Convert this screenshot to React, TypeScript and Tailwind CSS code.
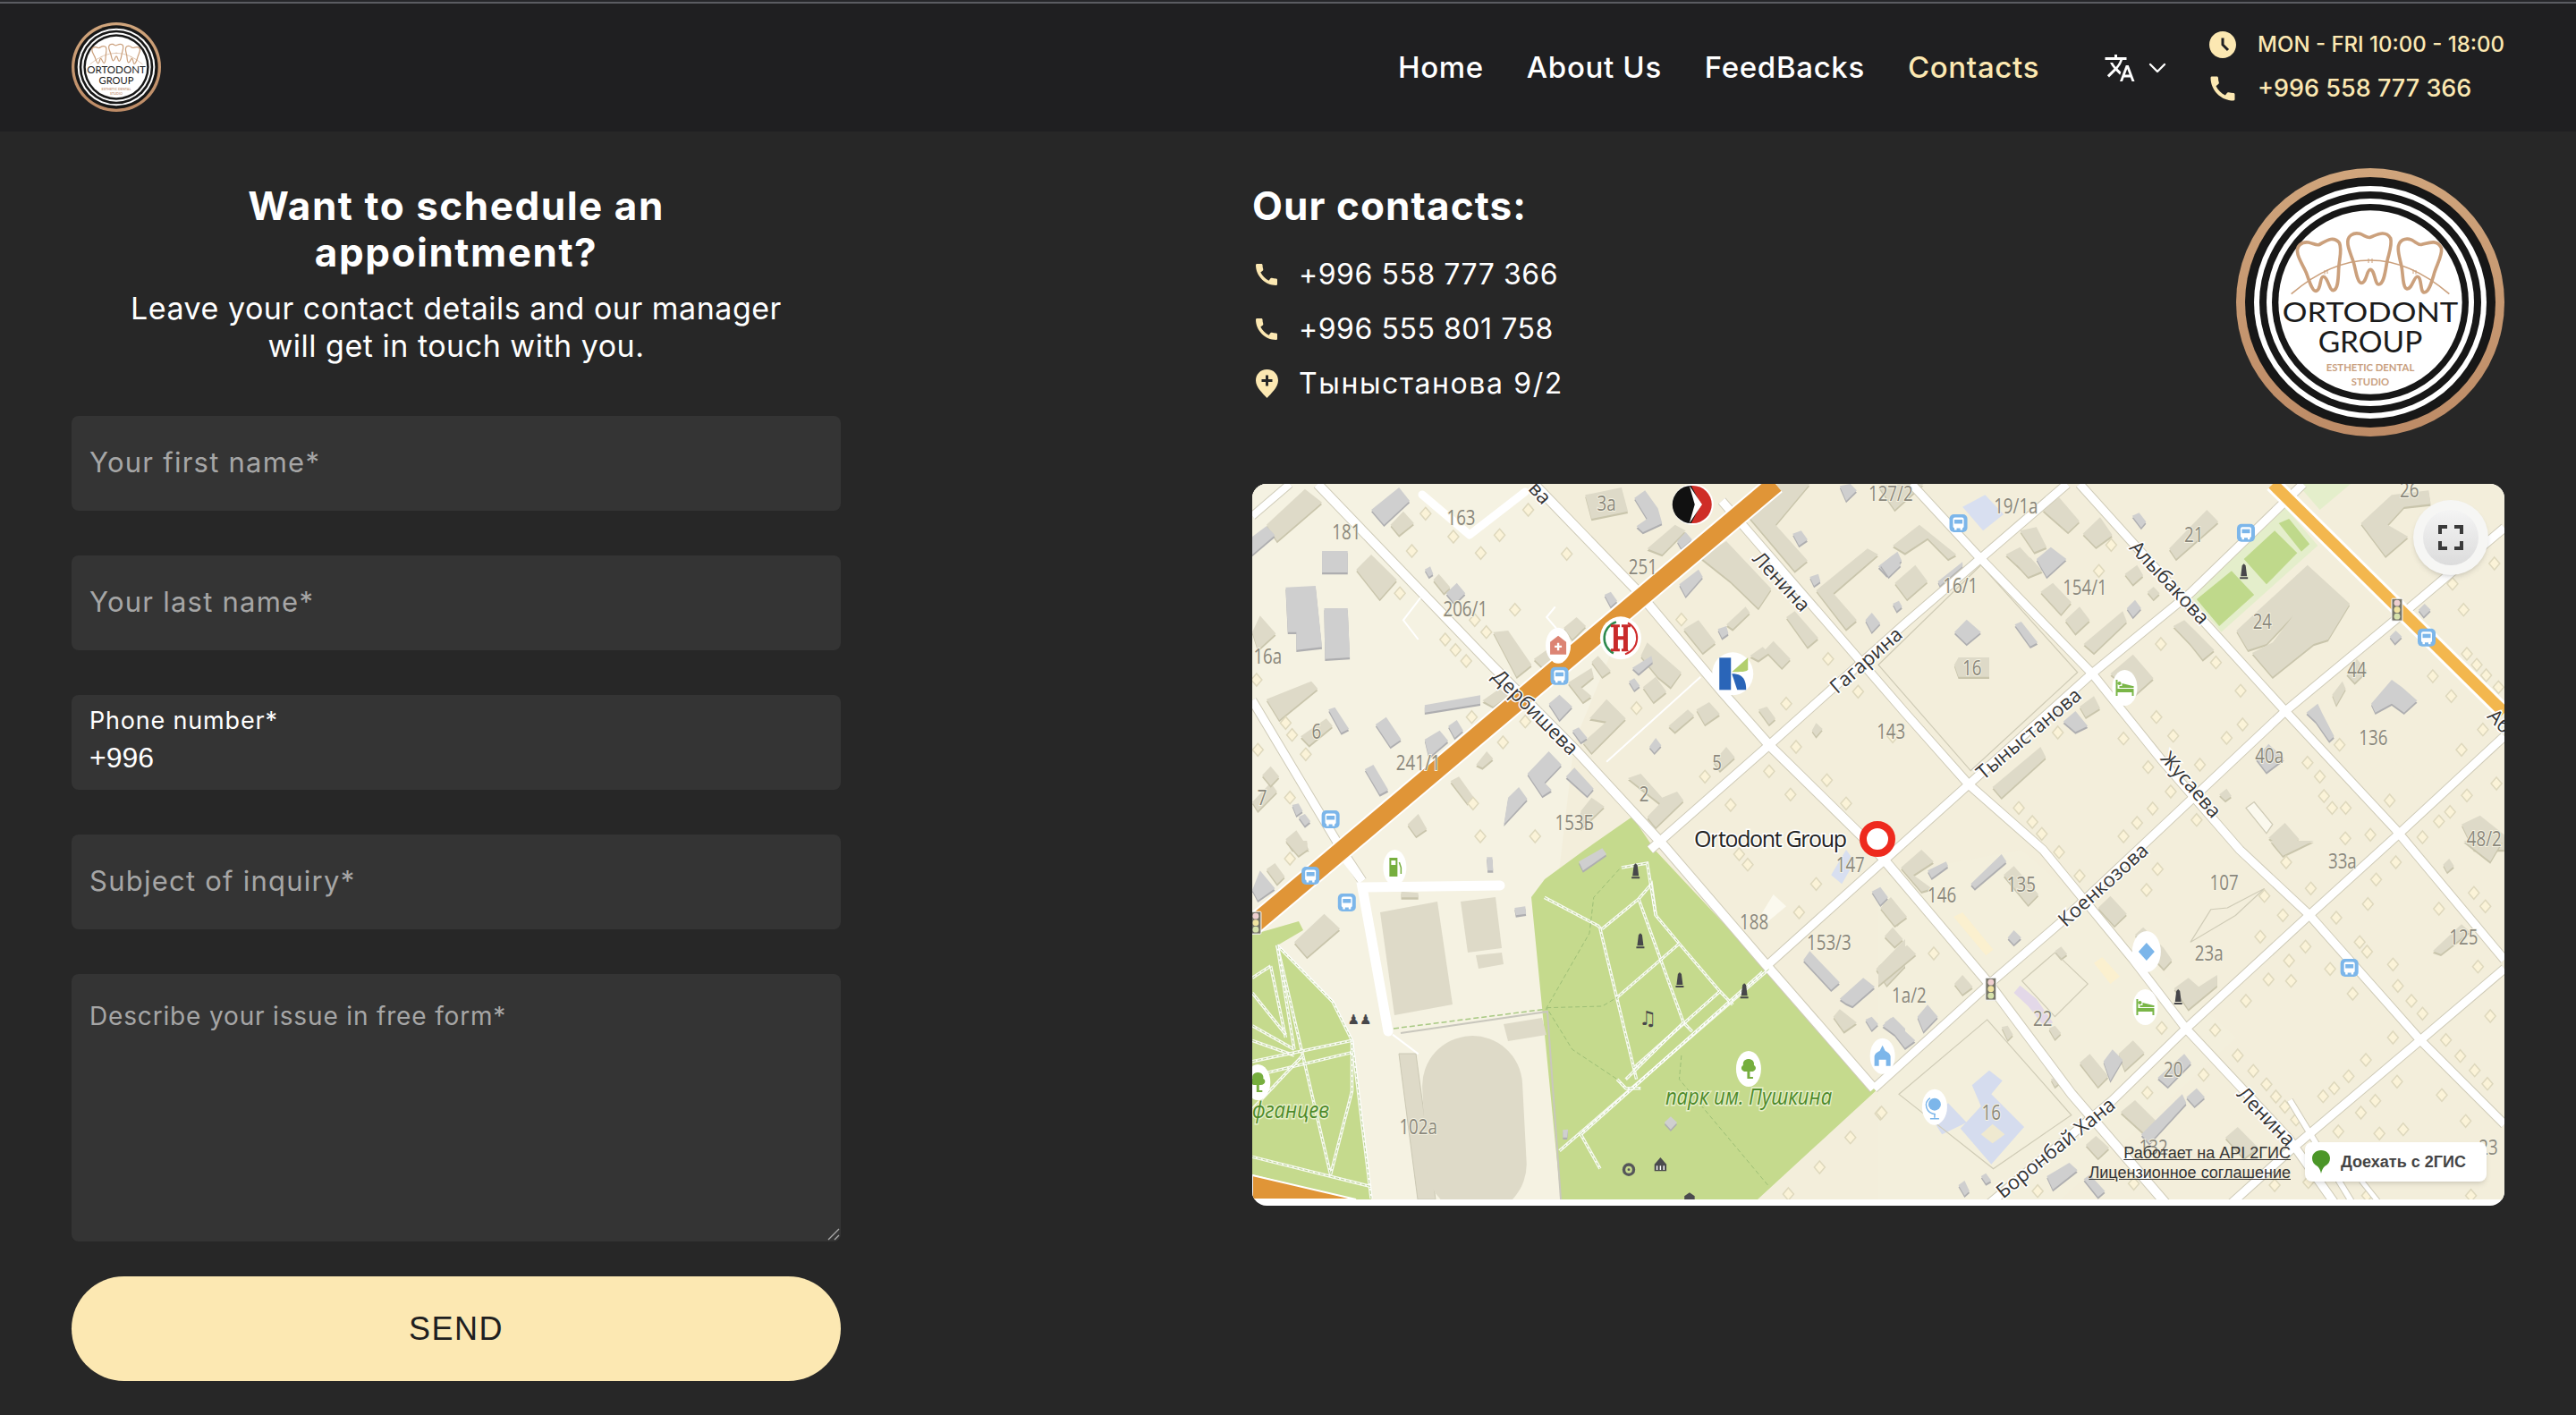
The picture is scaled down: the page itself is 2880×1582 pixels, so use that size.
import { ChevronDown } from 'lucide-react';
import { MdAccessTimeFilled, MdCall, MdTranslate } from 'react-icons/md';
import type { ReactNode } from 'react';

// Map geometry is noted in the pixel units of four crops of the map, one group per quadrant.
const Q = {
  nw: { x: 1380, y: 530, sx: 2.0907 },
  ne: { x: 2100, y: 530, sx: 2.1778 },
  sw: { x: 1380, y: 940, sx: 2.0907 },
  se: { x: 2100, y: 940, sx: 2.1778 },
};
type QuadName = keyof typeof Q;
const qt = (q: QuadName) => `translate(${Q[q].x} ${Q[q].y}) scale(${1 / Q[q].sx} ${1 / 3})`;
const at = (q: QuadName, x: number, y: number): [number, number] => [Q[q].x + x / Q[q].sx, Q[q].y + y / 3];

const TAN: Record<QuadName, string[]> = {
  nw: [
    '75,170 165,50 205,95 100,225', '285,320 320,270 380,355 340,420', '365,170 395,125 420,165 385,205',
    '465,355 478,335 505,380 490,400', '605,530 640,525 695,640 660,680', '700,620 750,570 770,590 725,655',
    '770,515 800,480 822,510 790,555', '75,755 180,695 195,720 105,825', '155,880 215,820 230,845 175,910',
    '580,760 620,720 640,745 605,780', '835,630 850,610 880,660 860,680', '780,700 835,650 840,680 810,715 835,745 815,765',
    '965,565 1045,665 1020,715 990,680 950,610', '955,715 985,680 1010,730 980,765', '830,820 870,755 915,820 835,935 815,900 870,830',
    '1015,845 1060,790 1075,810 1030,865', '1080,790 1110,765 1135,805 1100,840', '1050,520 1085,490 1125,565 1095,600',
    '1150,505 1195,445 1205,465 1165,520', '1090,280 1150,225 1255,385 1225,450 1160,360', '965,250 1030,170 1055,190 1000,270',
    '1195,130 1270,33 1345,33 1265,170 1340,290 1310,325', '1360,390 1480,250 1505,270 1400,400 1455,490 1430,520',
    '1290,480 1310,460 1365,550 1340,580', '1240,590 1260,560 1300,620 1280,650', '1205,610 1235,580 1250,600 1225,625',
    '1225,790 1245,780 1265,820 1250,840', '1350,860 1360,835 1375,855 1360,880', '1120,965 1150,915 1170,950 1135,995',
    '920,1020 950,1005 1000,1085 1035,1065 1050,1095 985,1185 965,1150 995,1105', '810,1130 835,1085 865,1115 810,1190',
    '505,1030 525,1015 560,1085 545,1105', '565,975 590,930 605,955 580,985', '405,1175 430,1140 450,1190 425,1215',
    '120,1225 145,1195 175,1260 135,1260', '42,1100 85,1035 100,1065 55,1130', '42,530 60,475 97,535 55,590',
    '65,1010 85,980 105,1015 85,1045', '820,70 905,45 920,125 835,150',
  ],
  ne: [
    '400,120 440,78 490,158 462,195', '498,200 540,145 570,205 530,245', '310,270 345,245 375,290 345,315',
    '345,190 385,178 410,245 380,262', '335,300 370,280 400,325 365,345', '40,365 90,305 120,360 70,420',
    '35,240 100,170 190,270 170,285 120,215 65,265', '395,395 425,365 470,430 445,470', '455,490 490,445 515,490 480,535',
    '500,570 595,460 605,495 525,600', '600,335 630,305 645,340 620,370', '655,395 670,378 685,400 670,420',
    '708,250 800,120 828,160 725,285', '718,510 745,490 775,530 818,590 790,622 760,570',
    '872,525 1045,305 1148,435 1095,555 1060,570 960,680 910,600 960,565 1010,475 945,570 900,590',
    '565,670 620,605 670,685 625,740', '278,1050 395,915 408,950 300,1085', '1105,740 1130,695 1138,720 1115,775',
    '490,780 525,745 540,785 505,815', '1140,670 1165,620 1190,660 1160,700',
    '1175,165 1250,70 1340,55 1345,100 1280,110 1240,170 1290,210 1235,275', '185,640 195,615 270,615 270,680 195,680',
    '830,1075 848,1055 860,1080 845,1095', '1420,1175 1465,1145 1524,1210 1524,1260 1450,1260', '950,1220 990,1170 1025,1225 990,1260',
    '0,40 60,33 110,33 40,120',
  ],
  sw: [
    '75,95 95,75 118,120 100,145', '140,340 210,245 247,295 170,390', '1500,430 1568,330 1568,420 1525,485',
    '1515,215 1535,190 1568,250 1550,280', '1400,590 1415,565 1455,610 1425,640', '390,170 430,175 430,190 390,190',
    '120,0 170,0 170,30 150,50',
  ],
  se: [
    '55,90 105,30 135,70 85,115 130,160 105,170', '305,115 330,85 390,180 365,215', '5,225 30,190 70,255 40,285',
    '15,320 35,290 60,330 40,355', '0,420 70,350 92,380 0,485', '185,480 205,450 230,490 205,515', '430,370 445,355 460,380 445,395',
    '535,225 565,185 605,245 575,285', '625,315 645,290 695,360 715,400 695,430 655,370', '720,495 755,460 780,490 825,450 825,485 755,565',
    '490,745 515,715 560,790 535,825', '585,715 620,670 648,710 600,770', '415,630 430,620 445,645 430,665', '300,625 315,620 328,650 315,668',
    '420,800 435,790 443,810 430,825', '590,910 625,870 680,945 650,985', '845,995 875,960 925,1030 890,1065', '505,1020 530,990 562,1030 535,1065',
    '1350,370 1420,280 1440,305 1370,380', '955,0 1060,0 985,50', '1425,0 1520,0 1490,70', '1375,80 1390,60 1402,85 1385,105',
  ],
};

const GRAY: Record<QuadName, string[]> = {
  nw: [
    '320,120 385,45 410,90 350,170', '42,210 75,175 95,205 42,270', '205,258 265,258 265,330 205,330',
    '120,380 190,375 205,580 145,590 145,530 125,530', '210,450 265,450 270,615 212,620', '495,400 520,365 540,400 515,435',
    '935,80 960,55 990,115 1000,165 955,195 940,175 965,150', '1035,225 1055,195 1070,220 1045,250', '1040,370 1085,320 1095,345 1055,410',
    '1130,520 1150,510 1155,535 1140,550', '930,650 975,610 978,630 945,670', '922,695 935,685 948,710 935,725', '445,775 575,742 575,770 445,800',
    '220,790 235,782 268,855 250,868', '330,840 355,815 390,890 365,915', '445,890 480,860 500,895 455,950', '500,845 520,825 535,860 515,885',
    '305,990 325,975 360,1060 340,1075', '685,1005 735,930 765,975 725,1035 742,1060 720,1080', '775,1015 795,985 840,1055 825,1080',
    '640,1085 665,1050 685,1090 630,1175', '735,770 760,740 790,780 760,825', '790,860 805,850 825,885 810,900', '970,915 985,885 998,910 982,935',
    '1505,310 1550,260 1560,290 1525,340', '1475,490 1490,465 1510,500 1490,530', '1415,40 1440,33 1455,55 1430,90', '1305,200 1325,190 1340,220 1320,240',
    '1345,345 1365,335 1370,360 1355,375', '445,320 458,310 465,335 455,345', '135,1110 150,1105 160,1130 145,1145', '150,1150 165,1140 178,1165 165,1180',
    '865,405 880,395 895,425 880,445',
  ],
  ne: [
    '5,305 35,272 55,305 25,345', '145,360 205,295 205,310 150,375', '185,530 215,488 250,530 215,570', '332,505 348,495 388,565 370,578',
    '385,285 420,245 458,285 410,345', '35,435 50,425 58,445 45,460', '605,450 625,422 640,450 620,480', '618,140 635,130 652,160 640,180',
    '450,830 480,795 510,845 480,865', '1245,545 1260,525 1275,545 1258,568', '1200,770 1250,690 1275,715 1312,760 1280,800 1250,770 1210,800',
    '1042,800 1070,770 1080,800 1110,880 1098,895 1065,830', '920,955 950,905 988,955 945,1000', '1315,455 1330,435 1345,455 1328,478',
  ],
  sw: [
    '805,70 860,25 870,45 815,100', '42,165 60,100 95,160 55,200', '1490,170 1510,155 1528,190 1510,215', '1330,400 1345,370 1415,475 1395,500',
    '1415,530 1470,460 1497,490 1445,555 1430,545', '1520,610 1540,590 1568,630 1568,670', '1475,600 1490,590 1505,615 1490,635',
    '590,55 603,55 605,100 592,100', '655,225 680,220 682,245 658,250', '1005,945 1020,925 1035,945 1020,968', '768,970 780,968 778,995 768,995',
  ],
  se: [
    '225,145 300,45 312,70 235,160', '120,100 165,70 170,85 130,125', '315,325 330,300 348,325 330,348', '548,740 570,700 595,735 565,805',
    '680,795 745,715 762,745 705,825', '640,985 740,850 750,880 660,1015', '750,860 775,830 795,860 770,890', '410,1125 465,1080 485,1105 425,1170',
    '500,1135 515,1120 552,1175 535,1195', '195,1155 210,1140 222,1175 210,1190', '250,1125 262,1115 275,1140 262,1150',
    '10,620 30,595 90,670 65,695 40,650', '95,590 120,550 145,590 110,640',
  ],
};

const DIAMONDS: Record<QuadName, number[]> = {
  nw: [447,133,687,120,512,210,620,205,415,258,576,265,777,268,387,400,656,455,562,490,589,530,493,555,517,590,542,627,1045,488,940,785,1290,770,1458,730,1388,620,555,815,628,900,680,830,1313,915,1100,1015,1250,997,1385,1027,1300,1075,1430,1105,1160,1110,575,1215,703,1215,558,1105,130,1085,120,835,135,875,167,940,55,925,52,690],
  ne: [567,238,537,325,688,570,822,632,882,727,887,840,848,885,783,975,1123,908,1350,678,1395,745,1472,857,1420,925,1398,368,1425,455,1500,300,1433,603,1457,640,1480,675,1510,715,677,815,718,878,597,887,437,867,657,983,1045,968,1075,1015,342,1120,375,1167,398,1207,630,1170,668,1122,712,1065,775,1160,597,1215,1085,1080,1105,1120,1138,1120,1245,1095,1365,1165,1392,1133,1433,1078,1505,1038,1325,1218,1137,1222,1198,1210,35,880],
  sw: [130,60,1320,240,1360,145,1200,80,1180,45,1368,1095,1295,1185,1510,915,1440,995],
  se: [440,38,680,95,490,118,653,165,993,72,1260,72,1053,160,1212,130,1192,212,1450,175,1365,228,1478,220,1115,258,985,250,940,185,930,322,1000,402,1040,355,1172,340,1190,372,1253,415,1100,430,1460,422,950,465,1005,470,895,537,1265,487,1155,513,1298,537,1325,580,1490,588,820,635,690,628,1382,668,1253,660,1417,722,1452,770,1187,735,875,720,913,772,1483,815,792,785,945,817,1145,790,1110,830,1083,857,968,858,990,892,1017,935,1263,808,1372,853,1210,872,1430,940,1175,912,1120,975,1278,968,1220,982,655,845,135,378,8,912,965,1155,1047,1145,1190,1190,1443,1190,388,1175,622,1150],
};

const NUMBERS: [QuadName, string, number, number][] = [
  ['nw','181',262,195],['nw','163',530,148],['nw','3а',870,100],['nw','251',955,312],['nw','206/1',540,453],['nw','16а',78,612],['nw','6',192,865],
  ['nw','241/1',430,968],['nw','5',1128,970],['nw','2',958,1075],['nw','7',65,1085],['nw','153Б',795,1170],['nw','143',1535,865],
  ['ne','127/2',30,65],['ne','19/1а',335,107],['ne','16/1',200,375],['ne','154/1',503,380],['ne','21',768,203],['ne','26',1293,55],['ne','24',935,495],
  ['ne','16',228,650],['ne','44',1165,657],['ne','136',1205,885],['ne','40а',952,945],['ne','48/2',1475,1225],
  ['sw','147',1440,80],['sw','188',1215,272],['sw','153/3',1390,342],['sw','102а',430,960],
  ['se','146',155,183],['se','135',348,147],['se','107',842,140],['se','33а',1130,68],['se','125',1425,325],['se','23а',805,377],['se','1а/2',75,520],
  ['se','22',400,597],['se','20',718,768],['se','16',275,912],['se','23',1485,1030],['se','132',670,1030],
];

// page coordinates: centre x, centre y, angle
const STREETS: [string, number, number, number][] = [
  ['Дербишева', 1717, 796, 45], ['Ленина', 1992, 650, 47], ['Гагарина', 2086, 738, -41], ['Алыбакова', 2426, 651, 47],
  ['Тыныстанова', 2268, 820, -40], ['Жусаева', 2450, 877, 49], ['Коенкозова', 2351, 989, -42], ['Боронбай Хана', 2298, 1283, -39],
  ['Ленина', 2534, 1248, 46], ['ва', 1722, 551, 47], ['Аб', 2795, 806, 46],
];

const ROADS: [string, number][] = [
  ['1473,541 1667,743 1763,840 1858,943 1973,1077 2095,1217', 10],
  ['1715,541 1830,660 1925,773 1978,833 2097,950 2224,1100 2316,1223 2421,1345', 10],
  ['1925,560 2130,797 2201,877 2284,950 2385,1073 2444,1150 2559,1273 2610,1345', 9],
  ['2137,541 2210,620 2339,753 2417,850 2504,950 2582,1023 2706,1163 2800,1257', 9],
  ['2325,541 2444,673 2555,795 2678,927 2800,1073', 9],
  ['1400,783 1500,950 1523,985', 9],
  ['1845,950 1978,833 2130,697 2311,541', 9],
  ['1975,1080 2201,877 2339,753 2449,663 2575,541', 9],
  ['2095,1217 2224,1100 2302,1033 2555,795 2678,693 2800,590', 9],
  ['2225,1345 2362,1230 2444,1150 2582,1023 2679,935 2800,823', 9],
  ['2495,1345 2564,1283 2706,1163 2800,1083', 9],
  ['1400,577 1442,541', 8],
  ['2630,1345 2560,1230', 6],
  ['2660,1345 2640,1320', 5],
];

const LEFT_PATHS = [
  '100,350 230,540 275,670 320,1200', '100,350 225,1120 275,840 275,670', '85,420 120,660', '42,460 85,420', '42,620 140,700', '42,670 140,720',
  '42,740 275,670', '42,790 275,710', '42,1060 320,1160', '42,510 120,650', '160,720 42,900', '100,350 140,700',
];
const PARK_PATHS = [
  '725,190 850,285 860,300', '855,295 940,800', '860,295 945,195 975,145 985,250 1040,345 1135,505 1165,550', '945,195 1050,610 1070,640',
  '1040,345 895,525', '1135,505 935,760', '1050,610 915,800', '760,1040 1250,430', '810,985 1235,440', '895,800 915,830 950,830', '810,985 855,1100',
  '905,90 965,75 985,250',
];

function BusStop({ q, x, y }: { q: QuadName; x: number; y: number }) {
  const [px, py] = at(q, x, y);
  return (
    <g transform={`translate(${px} ${py})`}>
      <rect x="-10" y="-10" width="20" height="20" rx="5" fill="#7cb6ea" />
      <rect x="-6" y="-6.5" width="12" height="12" rx="2" fill="#fff" />
      <rect x="-4.5" y="-4" width="9" height="4.5" fill="#7cb6ea" />
      <rect x="-4.5" y="5" width="2.5" height="2.5" fill="#fff" />
      <rect x="2" y="5" width="2.5" height="2.5" fill="#fff" />
    </g>
  );
}

function TrafficLight({ q, x, y }: { q: QuadName; x: number; y: number }) {
  const [px, py] = at(q, x, y);
  return (
    <g transform={`translate(${px} ${py})`}>
      <rect x="-6" y="-12.5" width="12" height="25" rx="1" fill="#77766a" stroke="#fff" />
      <circle cy="-7.5" r="3.4" fill="#efcfd0" />
      <circle r="3.4" fill="#f0e3a0" />
      <circle cy="7.5" r="3.4" fill="#d6e2ac" />
    </g>
  );
}

function Monument({ q, x, y }: { q: QuadName; x: number; y: number }) {
  const [px, py] = at(q, x, y);
  return <path transform={`translate(${px} ${py})`} d="M-2 -7 L0 -9 L2 -7 L3.5 5 L-3.5 5 Z M-4.5 6 H4.5 V8 H-4.5 Z" fill="#47474a" />;
}

function Poi({ q, x, y, rx = 14, ry = 20, children }: { q: QuadName; x: number; y: number; rx?: number; ry?: number; children?: ReactNode }) {
  const [px, py] = at(q, x, y);
  return (
    <g transform={`translate(${px} ${py})`}>
      <ellipse rx={rx} ry={ry} fill="#fff" />
      {children}
    </g>
  );
}

const BED = <path d="M-10 -9 H-8 V1 H10 V9 H8 V5 H-8 V9 H-10 Z M-6 -2 H10 V0 H-6 Z M-6 -7 a2 2 0 1 0 .1 0 Z M-3 -5 L9 -2 H-3 Z" fill="#7ab648" />;
const TREE = <path d="M-1.5 11 V3 C-8 4 -10 -2 -6 -4 C-7 -10 -2 -11 0 -11 C2 -11 7 -10 6 -4 C10 -2 8 4 1.5 3 V9 H5 V11 Z" fill="#76ae3e" />;

function CityMap() {
  return (
    <svg viewBox="1400 541 1400 800" className="block h-[800px] w-[1400px]" fontFamily="'Open Sans', sans-serif">
      <rect x="1400" y="541" width="1400" height="800" fill="#f3eedb" />
      <polygon points="1400,541 1720,541 1830,660 1760,830 1740,1000 1745,1341 1400,1341" fill="#f5f2e2" />
      <polygon points="2100,980 2260,950 2500,1160 2300,1345 2100,1345" fill="#f3efdc" />
      <polygon points="2560,760 2700,870 2600,1000 2480,870" fill="#f3eedb" />

      {/* parks */}
      <polygon points="1825,913 1850,950 2100,1217 1965,1341 1745,1341 1712,1003 1727,983 1772,950" fill="#c5da8d" />
      <polygon points="1400,1050 1428,1057 1490,1120 1512,1163 1533,1341 1514,1341 1400,1313" fill="#c5da8d" />
      <polygon points="1400,1045 1452,1030 1457,1040 1428,1057 1400,1070" fill="#c5da8d" />
      <g transform={qt('ne')}>
        <polygon points="760,410 990,110 1070,240 835,530" fill="#e4eecb" />
        <polygon points="1020,33 1150,33 1075,120" fill="#e4eecb" />
        <polygon points="775,420 860,325 915,405 830,510" fill="#bfd98b" />
        <polygon points="890,285 965,190 1020,265 945,370" fill="#bfd98b" />
        <polygon points="975,165 1000,150 1050,235 1030,260" fill="#bfd98b" />
      </g>

      {/* stadium grounds */}
      <g fill="#dedac8">
        <polygon points="1543,1020 1607,1008 1624,1123 1559,1135" />
        <polygon points="1633,1008 1672,1003 1679,1060 1641,1065" />
        <polygon points="1650,1068 1679,1065 1681,1078 1653,1083" />
        <polygon points="1681,1145 1724,1138 1729,1157 1686,1164" />
        <polygon points="1564,1178 1583,1178 1605,1341 1585,1341" stroke="#cbc8b4" />
        <rect x="1592" y="1158" width="112" height="200" rx="56" transform="rotate(-3 1648 1250)" />
      </g>
      <polyline points="1566,1155 1730,1131 1745,1341" fill="none" stroke="#c9c7bd" strokeWidth="2" />
      <polyline points="1558,1150 1730,1128" fill="none" stroke="#a8c983" strokeWidth="1.5" strokeDasharray="6 3" />

      {/* buildings */}
      {(Object.keys(Q) as QuadName[]).map((q) => (
        <g key={q} transform={qt(q)}>
          {TAN[q].map((p) => (
            <g key={p}>
              <polygon points={p} fill="#c9c5ac" transform="translate(0 7)" />
              <polygon points={p} fill="#dedac8" />
            </g>
          ))}
          {GRAY[q].map((p) => (
            <g key={p}>
              <polygon points={p} fill="#aeaeb0" transform="translate(0 7)" />
              <polygon points={p} fill="#cfcfcf" />
            </g>
          ))}
        </g>
      ))}
      <g transform={qt('ne')}>
        <polygon points="205,110 260,70 305,135 255,190" fill="#d8dff0" />
        <polygon points="895,1120 915,1100 960,1175 945,1205" fill="#fbf9ee" stroke="#cfcbb6" strokeWidth="3" />
        <polygon points="250,305 485,665 225,995 0,640" fill="none" stroke="#cfcbb6" strokeWidth="3" />
      </g>
      <g transform={qt('sw')}>
        <polygon points="1395,115 1430,30 1450,70 1420,145" fill="#d8dff0" />
        <polygon points="1230,250 1260,180 1290,220 1240,280" fill="#fbf9ee" />
      </g>
      <g transform={qt('se')}>
        <polygon points="228,820 270,770 302,805 275,850 355,960 275,1085 200,965 250,890" fill="#d5dcee" />
        <polygon points="250,985 278,950 308,985 278,1015" fill="#efe9d0" />
        <polygon points="130,930 170,880 215,945 155,985" fill="#d5dcee" />
        <polygon points="330,510 345,485 385,530 425,610 405,625 365,555" fill="#e3d8e8" />
        <polygon points="183,255 205,240 280,365 262,385" fill="#fbf0cf" />
        <polygon points="525,410 545,390 588,455 565,480" fill="#fbf0cf" />
        <polygon points="350,470 430,375 510,480 430,590" fill="none" stroke="#cfcbb6" strokeWidth="3" />
        <polygon points="810,230 850,225 940,160 870,250 760,340" fill="none" stroke="#cfcbb6" strokeWidth="3" />
        <polygon points="50,850 265,600 470,920 280,1100" fill="none" stroke="#cfcbb6" strokeWidth="3" />
      </g>

      {/* small houses */}
      {(Object.keys(DIAMONDS) as QuadName[]).map((q) =>
        DIAMONDS[q]
          .filter((_, i) => i % 2 === 0)
          .map((v, i) => {
            const [px, py] = at(q, v, DIAMONDS[q][i * 2 + 1]);
            return <polygon key={`${q}${i}`} transform={`translate(${px} ${py})`} points="0,-7 6,0 0,7 -6,0" fill="#fbf3d8" stroke="#ded8bd" strokeWidth="1.5" />;
          }),
      )}

      {/* streets */}
      {ROADS.map(([p, w]) => (
        <polyline key={p} points={p} fill="none" stroke="#cfcbb8" strokeWidth={w + 2} />
      ))}
      {ROADS.map(([p, w]) => (
        <polyline key={p} points={p} fill="none" stroke="#fff" strokeWidth={w} />
      ))}
      <polyline points="1590,553 1643,598 1705,550" fill="none" stroke="#fff" strokeWidth="9" strokeLinecap="round" strokeLinejoin="round" />
      <polyline points="1677,990 1523,992 1552,1153" fill="none" stroke="#fff" strokeWidth="11" strokeLinecap="round" />
      <polyline points="1523,985 1500,955" fill="none" stroke="#fff" strokeWidth="9" />
      <g transform={qt('nw')} fill="none" stroke="#fff" strokeWidth="2">
        <polyline points="435,415 395,490 430,555" vectorEffect="non-scaling-stroke" />
        <polyline points="750,445 730,480 760,530" vectorEffect="non-scaling-stroke" />
        <polyline points="1090,680 870,965" vectorEffect="non-scaling-stroke" />
      </g>

      {/* park paths */}
      <g fill="none" transform={qt('sw')}>
        {[...LEFT_PATHS, ...PARK_PATHS].map((p) => (
          <g key={p}>
            <polyline points={p} stroke="#fff" strokeWidth="3.5" vectorEffect="non-scaling-stroke" opacity="0.85" />
            <polyline points={p} stroke="#a9c77f" strokeWidth="0.8" strokeDasharray="4 2" vectorEffect="non-scaling-stroke" />
          </g>
        ))}
        <polyline points="900,95 840,190 830,310 730,560 790,700 895,800" stroke="#9dbf76" strokeWidth="1" strokeDasharray="5 3" vectorEffect="non-scaling-stroke" />
        <polyline points="730,560 860,555 895,525" stroke="#9dbf76" strokeWidth="1" strokeDasharray="5 3" vectorEffect="non-scaling-stroke" />
        <polyline points="1045,720 1040,800 1250,1160" stroke="#9dbf76" strokeWidth="1" strokeDasharray="5 3" vectorEffect="non-scaling-stroke" />
        <polyline points="370,650 430,715" stroke="#fff" strokeWidth="2" vectorEffect="non-scaling-stroke" />
      </g>

      {/* highways */}
      <polyline points="1985,541 1400,1035" fill="none" stroke="#fff" strokeWidth="24" />
      <polyline points="1985,541 1400,1035" fill="none" stroke="#e09537" strokeWidth="20" />
      <polyline points="2541,541 2800,797" fill="none" stroke="#fff" strokeWidth="19" />
      <polyline points="2541,541 2800,797" fill="none" stroke="#f3b74e" strokeWidth="13" />
      <polygon points="1400,1314 1516,1341 1400,1341" fill="#e09537" stroke="#fff" strokeWidth="2" />

      {/* stand-in glyphs */}
      <g transform={qt('sw')}>
        <ellipse cx="922" cy="1103" rx="15" ry="22" fill="#55565a" />
        <ellipse cx="922" cy="1103" rx="8" ry="12" fill="#c5da8d" />
        <ellipse cx="922" cy="1103" rx="3" ry="4" fill="#55565a" />
        <path d="M982 1085 L996 1062 L1010 1085 V1108 H982 Z" fill="#4b4b4e" />
        <path d="M988 1090 V1104 M996 1090 V1104 M1004 1090 V1104" stroke="#fff" strokeWidth="3" />
        <path d="M1052 1203 V1192 L1064 1180 L1076 1192 V1203 Z" fill="#4b4b4e" />
      </g>

      {/* house numbers */}
      <g fill="#8b887c" fontSize="24" textAnchor="middle">
        {NUMBERS.map(([q, t, x, y]) => {
          const [px, py] = at(q, x, y);
          return (
            <text key={q + t + x} transform={`translate(${px} ${py + 8}) scale(0.78 1)`} stroke="#f5f2e2" strokeWidth="2" paintOrder="stroke">
              {t}
            </text>
          );
        })}
      </g>

      {/* street names */}
      <g fill="#333" fontSize="22" textAnchor="middle">
        {STREETS.map(([t, x, y, a]) => (
          <text key={t + x} transform={`translate(${x} ${y}) rotate(${a})`} dy="8" stroke="#fff" strokeWidth="3" paintOrder="stroke">
            {t}
          </text>
        ))}
      </g>
      <g fill="#4d8a2a" fontSize="25" fontStyle="italic" textAnchor="middle" stroke="#e6efc8" strokeWidth="3" paintOrder="stroke">
        <text transform="translate(1955 1235) scale(0.88 1)">парк им. Пушкина</text>
        <text transform="translate(1443 1250) scale(0.88 1)">фганцев</text>
      </g>

      {/* markers */}
      <BusStop q="nw" x={760} y={677} />
      <BusStop q="nw" x={225} y={1158} />
      <BusStop q="ne" x={195} y={165} />
      <BusStop q="ne" x={895} y={197} />
      <BusStop q="ne" x={1335} y={548} />
      <BusStop q="sw" x={178} y={117} />
      <BusStop q="sw" x={263} y={207} />
      <BusStop q="se" x={1147} y={426} />
      <TrafficLight q="ne" x={1263} y={455} />
      <TrafficLight q="sw" x={50} y={275} />
      <TrafficLight q="se" x={274} y={497} />
      <Monument q="ne" x={890} y={328} />
      <Monument q="sw" x={938} y={103} />
      <Monument q="sw" x={949} y={337} />
      <Monument q="sw" x={1041} y={468} />
      <Monument q="sw" x={1192} y={505} />
      <Monument q="se" x={730} y={525} />
      <text x="1842" y="1146" fontSize="22" fill="#47474a" textAnchor="middle" fontFamily="'DejaVu Sans', sans-serif">♫</text>
      <text x="1520" y="1145" fontSize="15" fill="#47474a" textAnchor="middle" fontFamily="'DejaVu Sans', sans-serif">♟♟</text>

      <Poi q="ne" x={600} y={717}>{BED}</Poi>
      <Poi q="se" x={650} y={558}>{BED}</Poi>
      <Poi q="sw" x={1202} y={765}>{TREE}</Poi>
      <Poi q="sw" x={55} y={810}>{TREE}</Poi>
      <Poi q="sw" x={375} y={90} rx={13}>
        <path d="M-6 -11 H3 V10 H-6 Z" fill="#76ae3e" />
        <rect x="-4" y="-8" width="5" height="5" fill="#fff" />
        <path d="M5 -6 L7 0 V7" fill="none" stroke="#76ae3e" strokeWidth="1.5" />
      </Poi>
      <Poi q="se" x={653} y={372} rx={16} ry={23}>
        <path d="M0 -10 L9 0 L0 10 L-9 0 Z" fill="#7cb6ea" />
      </Poi>
      <Poi q="se" x={137} y={893}>
        <circle cy="-3" r="7" fill="#7cb6ea" />
        <path d="M-5 -10 A11 10 0 0 0 1 8 M0 8 V12 M-5 13 H5" fill="none" stroke="#7cb6ea" strokeWidth="1.5" />
      </Poi>
      <Poi q="sw" x={1515} y={722}>
        <path d="M-9 11 V0 C-8 -4 -4 -5 -3 -6 C-2 -8 -1 -10 0 -12 C1 -10 2 -8 3 -6 C4 -5 8 -4 9 0 V11 H4 V4 H-4 V11 Z" fill="#7cb6ea" />
      </Poi>
      <Poi q="nw" x={757} y={575}>
        <path d="M0 -11 L9 -4 V10 H-9 V-4 Z" fill="#dc8474" />
        <path d="M-1.2 -3 H1.2 V0 H4 V2.4 H1.2 V5.5 H-1.2 V2.4 H-4 V0 H-1.2 Z" fill="#fff" />
      </Poi>
      <Poi q="nw" x={903} y={550} rx={23} ry={24}>
        <path d="M-8 17 A19 19 0 0 1 -5 -18" fill="none" stroke="#2f8a4e" strokeWidth="2.5" />
        <path d="M5 18 A19 19 0 0 0 8 -17" fill="none" stroke="#cf2b2b" strokeWidth="2" />
        <path d="M-11 -15 H-1 V-12 H-3 V-2 H3 V-12 H1 V-15 H11 V-12 H8 V12 C8 15 10 15 11 15 H1 V12 H3 V2 H-3 V12 H-1 V15 H-11 V12 H-8 V-12 H-11 Z" fill="#c92a2a" />
      </Poi>
      <Poi q="nw" x={1165} y={670} rx={23} ry={24}>
        <rect x="-15" y="-18" width="13" height="36" fill="#2a65b8" />
        <path d="M-1 -2 L17 -18 V-5 C17 -2 8 -2 -1 -2 Z" fill="#b3cf6d" />
        <path d="M-1 0 C8 0 15 3 15 18 H5 C3 12 1 6 -1 0 Z" fill="#2a65b8" />
      </Poi>
      <g transform={`translate(${at('nw', 1072, 102)[0]} ${at('nw', 1072, 102)[1]})`}>
        <circle r="23" fill="#fff" />
        <path d="M0 -21 A21 21 0 0 1 0 21 L-4 21 L10 0 L-4 -21 Z" fill="#cf2d27" />
        <path d="M-2 -21 A21 21 0 0 0 -2 21 L9 0 Z" fill="#111" />
        <path d="M-4 -21 L10 0 L-4 21 L2 0 Z" fill="#fff" />
      </g>

      <circle cx="2099" cy="938" r="16" fill="#fff" stroke="#ee2a1e" strokeWidth="8" />
      <text x="1894" y="947" fontSize="25" fill="#222" stroke="#fff" strokeWidth="3" paintOrder="stroke" textLength="171">Ortodont Group</text>
    </svg>
  );
}

function Logo({ className }: { className: string }) {
  const tooth =
    'M375 257 C370 225 395 215 415 220 C430 225 440 235 450 232 C470 225 500 205 518 235 C525 260 510 290 505 320 C500 350 495 390 478 390 C465 390 465 340 450 340 C438 340 438 385 420 385 C405 385 400 330 392 310 C385 290 378 275 375 257 Z';
  return (
    <svg viewBox="0 0 900 900" className={className}>
      <defs>
        <linearGradient id="copper" x1="0" y1="0" x2="0" y2="1">
          <stop offset="0" stopColor="#d0a57c" />
          <stop offset="1" stopColor="#bd8b66" />
        </linearGradient>
      </defs>
      <circle cx="450" cy="450" r="450" fill="url(#copper)" />
      <circle cx="450" cy="450" r="420" fill="#171717" />
      <circle cx="450" cy="450" r="390" fill="#fff" />
      <circle cx="450" cy="450" r="372" fill="#171717" />
      <circle cx="450" cy="450" r="348" fill="#fff" />
      <circle cx="450" cy="450" r="330" fill="#171717" />
      <circle cx="450" cy="450" r="308" fill="#fff" />
      <g fill="none" stroke="#cba07c" strokeWidth="11">
        <path d={tooth} />
        <path d={tooth} transform="translate(-163 24) rotate(-7 450 300)" />
        <path d={tooth} transform="translate(163 24) rotate(7 450 300)" />
        <path d="M185 422 Q450 196 715 422" strokeWidth="5" />
        <path d="M297 342 V356 M306 340 V354 M444 303 V318 M456 303 V318 M594 340 V354 M603 342 V356" strokeWidth="3" />
      </g>
      <g textAnchor="middle" fontFamily="Lato, sans-serif" fill="#1b1b1b">
        <text x="450" y="515" fontSize="95" textLength="590" lengthAdjust="spacingAndGlyphs">ORTODONT</text>
        <text x="450" y="619" fontSize="100" textLength="350" lengthAdjust="spacingAndGlyphs">GROUP</text>
        <text x="450" y="682" fontSize="31" fontWeight="700" fill="#c9a07f" textLength="296" lengthAdjust="spacingAndGlyphs">ESTHETIC DENTAL</text>
        <text x="450" y="729" fontSize="31" fontWeight="700" fill="#c9a07f" textLength="127" lengthAdjust="spacingAndGlyphs">STUDIO</text>
      </g>
    </svg>
  );
}

function Field({ placeholder }: { placeholder: string }) {
  return (
    <input
      placeholder={placeholder}
      className="h-[106px] w-full rounded-lg bg-[#343434] px-5 pb-[3px] text-[31px] tracking-[0.04em] text-white outline-none placeholder:text-[#a6a6a6]"
    />
  );
}

export default function App() {
  return (
    <div className="min-h-[1582px] bg-[#272727] [font-family:Inter,sans-serif] text-white">
      <div className="h-[4px] bg-[#26262a]">
        <div className="h-[2px] translate-y-[2px] bg-[#5b5c62]" />
      </div>
      <header className="flex h-[143px] items-center bg-[#1f1f21] pr-[80px] pl-[80px]">
        <Logo className="h-[100px] w-[100px] -translate-y-[1px]" />
        <nav className="ml-auto flex items-center gap-[48px] text-[33px] font-medium tracking-[0.02em]">
          <a>Home</a>
          <a>About Us</a>
          <a>FeedBacks</a>
          <a className="text-[#fce8b2]">Contacts</a>
        </nav>
        <div className="ml-[72px] flex items-center gap-[8px]">
          <MdTranslate size={36} />
          <ChevronDown size={32} strokeWidth={1.75} />
        </div>
        <div className="ml-[39px] flex flex-col gap-[11px] text-[#fce8b2]">
          <div className="flex items-center gap-[21px] text-[24px] font-medium">
            <MdAccessTimeFilled size={36} />
            <span>MON - FRI 10:00 - 18:00</span>
          </div>
          <div className="flex items-center gap-[21px] text-[27px] font-medium">
            <MdCall size={36} />
            <span>+996 558 777 366</span>
          </div>
        </div>
      </header>

      <main className="flex justify-between px-[80px]">
        <section className="w-[860px] pt-[57px]">
          <h2 className="text-center text-[44px] leading-[52px] font-bold tracking-[0.035em]">
            Want to schedule an
            <br />
            appointment?
          </h2>
          <p className="mt-[16px] text-center text-[34px] leading-[42px] tracking-[0.015em]">
            Leave your contact details and our manager
            <br />
            will get in touch with you.
          </p>
          <form className="mt-[57px] flex flex-col gap-[50px]">
            <Field placeholder="Your first name*" />
            <Field placeholder="Your last name*" />
            <div className="flex h-[106px] flex-col rounded-lg bg-[#343434] px-5 pt-[15px]">
              <label className="text-[27px] leading-[28px] tracking-[0.03em]">Phone number*</label>
              <span className="mt-[8px] font-['Liberation_Sans',sans-serif] text-[32px] leading-[38px]">+996</span>
            </div>
            <Field placeholder="Subject of inquiry*" />
            <div className="relative h-[299px]">
              <textarea
                placeholder="Describe your issue in free form*"
                className="block h-full w-full resize-none rounded-lg bg-[#343434] px-5 pt-[26px] text-[28px] tracking-[0.03em] text-white outline-none placeholder:text-[#a6a6a6]"
              />
              <svg viewBox="0 0 14 14" className="absolute right-[1px] bottom-[1px] h-[14px] w-[14px]" stroke="#a8a8a8" strokeWidth="1.4">
                <path d="M1 13 L13 1 M8 13 L13 8" />
              </svg>
            </div>
            <button type="button" className="-mt-[11px] h-[117px] rounded-full bg-[#fce8b2] font-['Liberation_Sans',sans-serif] text-[36px] tracking-[0.04em] text-[#1f1f1f]">
              SEND
            </button>
          </form>
        </section>

        <section className="w-[1400px] pt-[41px]">
          <div className="flex justify-between">
            <div className="pt-[16px]">
              <h2 className="text-[44px] leading-[52px] font-bold tracking-[0.025em]">Our contacts:</h2>
              <ul className="mt-[30px] flex flex-col gap-[19px] text-[32px] leading-[42px] tracking-[0.017em]">
                <li className="flex items-center gap-[20px]">
                  <MdCall size={32} className="text-[#fce8b2]" />
                  +996 558 777 366
                </li>
                <li className="flex items-center gap-[20px]">
                  <MdCall size={32} className="text-[#fce8b2]" />
                  +996 555 801 758
                </li>
                <li className="flex items-center gap-[20px] tracking-[0.05em]">
                  <svg viewBox="0 0 25 32" className="mr-[3px] ml-[4px] h-[32px] w-[25px] text-[#fce8b2]">
                    <path d="M12.5 0 C20 0 25 5.5 25 12.5 C25 20 17 27 12.5 32 C8 27 0 20 0 12.5 C0 5.5 5 0 12.5 0 Z" fill="currentColor" />
                    <path d="M11 6.5 H14 V11 H18.5 V14 H14 V18.5 H11 V14 H6.5 V11 H11 Z" fill="#272727" />
                  </svg>
                  Тыныстанова 9/2
                </li>
              </ul>
            </div>
            <Logo className="h-[300px] w-[300px]" />
          </div>

          <div className="relative mt-[53px] h-[807px] w-[1400px] overflow-hidden rounded-[16px] bg-white">
            <CityMap />
            <button type="button" className="absolute top-[18px] right-[18px] flex h-[84px] w-[84px] items-center justify-center rounded-full bg-[#f6f6f4] shadow-md">
              <span className="flex h-[62px] w-[62px] items-center justify-center rounded-full bg-gradient-to-b from-[#f4f4f4] to-[#dcdcdc]">
                <svg viewBox="0 0 28 28" className="h-[28px] w-[28px]" fill="none" stroke="#3a3a3a" strokeWidth="4">
                  <path d="M2 10 V2 H10 M18 2 H26 V10 M26 18 V26 H18 M10 26 H2 V18" />
                </svg>
              </span>
            </button>
            <div className="absolute top-[737px] right-[239px] flex flex-col items-end font-['Liberation_Sans',sans-serif] text-[18px] leading-[22px] text-[#333] underline">
              <span>Работает на API 2ГИС</span>
              <span>Лицензионное соглашение</span>
            </div>
            <div className="absolute top-[736px] right-[20px] flex h-[44px] w-[203px] items-center gap-[12px] rounded-lg bg-white pl-[8px] font-['Liberation_Sans',sans-serif] text-[18px] font-bold text-[#444] shadow-md">
              <svg viewBox="0 0 20 26" className="h-[26px] w-[20px]">
                <path d="M10 26 C9 22 8 20 6 18 C2 16 0 13 0 9 C0 4 4 0 10 0 C16 0 20 4 20 9 C20 13 18 16 14 18 C12 20 11 22 10 26 Z" fill="#4b9628" />
              </svg>
              Доехать с 2ГИС
            </div>
          </div>
        </section>
      </main>
    </div>
  );
}
